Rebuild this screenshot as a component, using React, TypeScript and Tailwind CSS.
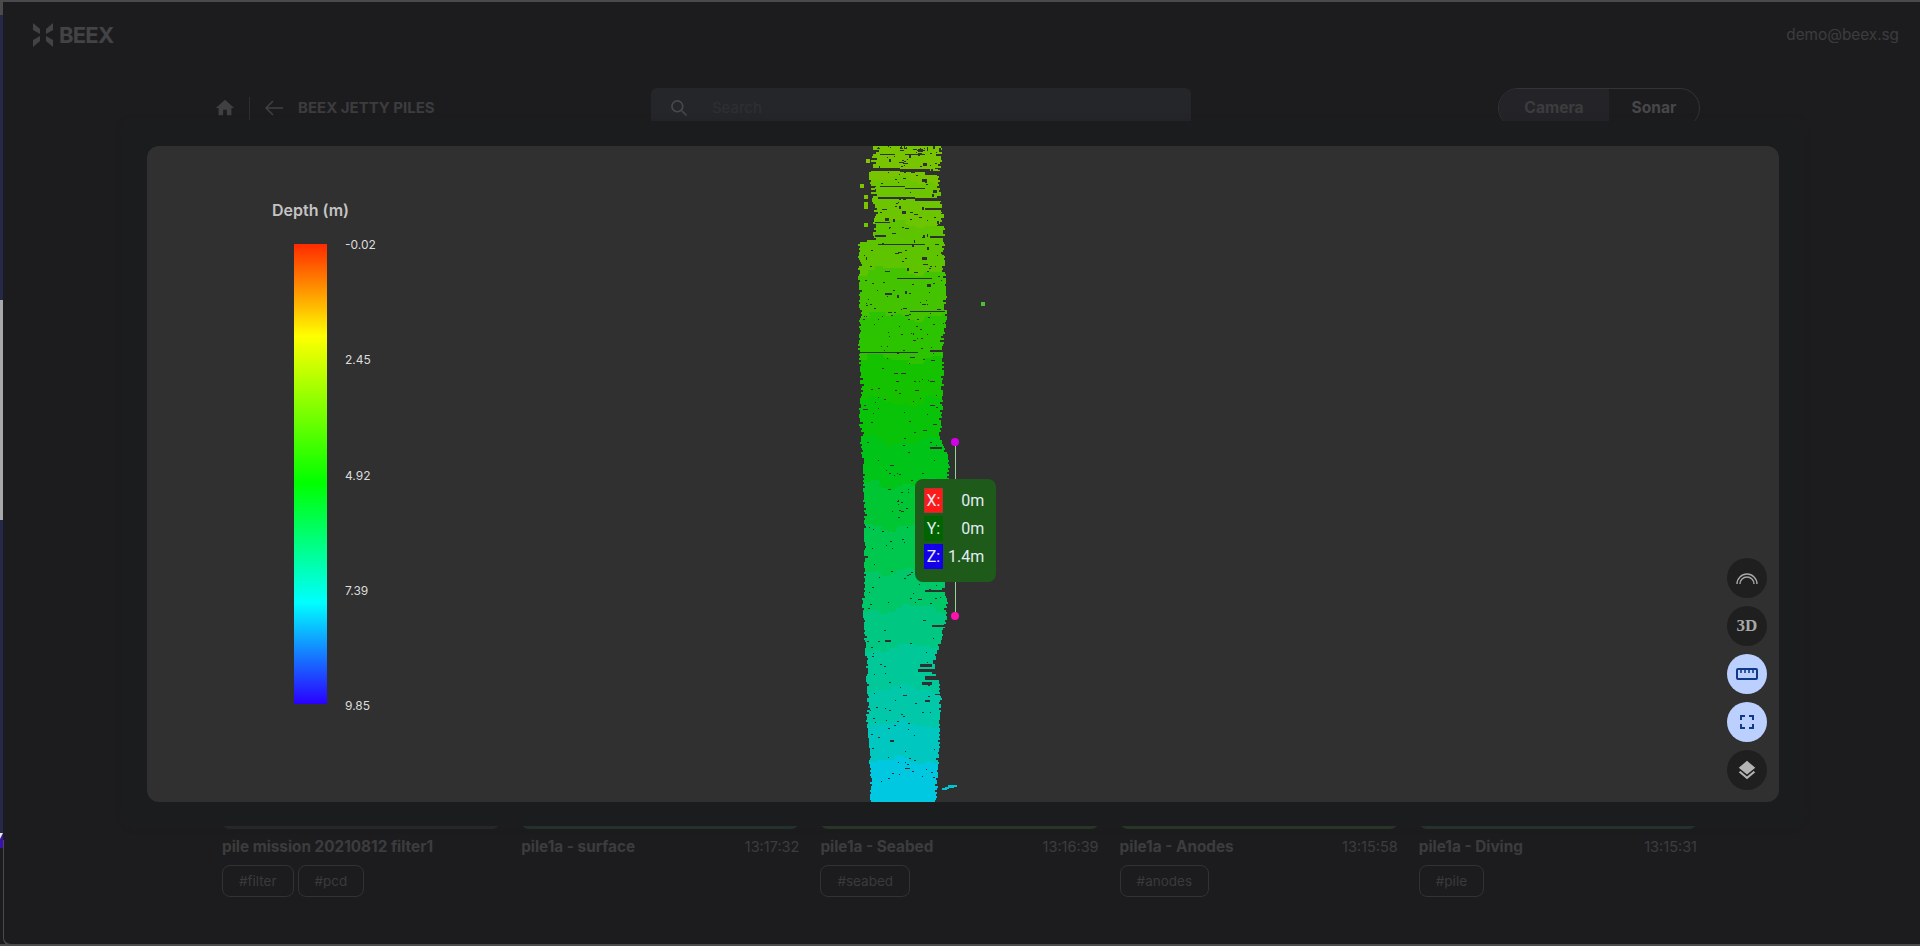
import React, { useMemo } from "react";

const sil: number[][] = [
  [146,873,942],[160,871,942],[175,868,940],[190,871,941],[210,873,944],[238,873,945],[242,858,945],[280,858,946],[300,859,947],[320,859,947],[340,858,944],[380,860,944],[420,859,943],[436,860,940],[445,860,945],[460,862,950],[490,863,950],[520,864,952],[560,864,950],[590,864,945],[600,862,948],[620,863,947],[640,864,942],[660,865,935],[672,866,935],[680,866,940],[700,867,942],[720,866,940],[740,868,940],[760,869,939],[780,870,938],[802,870,937],
];
const stops: number[][] = [
  [146,126,196,0],[240,98,196,0],[300,64,196,0],[380,20,194,0],[450,0,196,16],[550,0,200,80],[650,0,200,144],[720,0,200,176],[780,0,200,224],[802,0,204,240],
];
const bandEdges = [146,180,223,270,315,358,400,440,483,525,570,608,647,688,723,760,802];

function interp(table: number[][], y: number): number[] {
  for (let i = 0; i < table.length - 1; i++) {
    const a = table[i], b = table[i + 1];
    if (y >= a[0] && y <= b[0]) {
      const t = (y - a[0]) / (b[0] - a[0]);
      return a.map((v, k) => v + (b[k] - v) * t);
    }
  }
  return table[table.length - 1];
}
function rng(seed: number) {
  let s = seed;
  return () => {
    s = (s * 1664525 + 1013904223) >>> 0;
    return s / 4294967296;
  };
}

function bandColor(y: number) {
  let i = 0;
  while (i < bandEdges.length - 2 && y >= bandEdges[i + 1]) i++;
  const mid = (bandEdges[i] + bandEdges[i + 1]) / 2;
  const [, r, g, b] = interp(stops, mid);
  return `rgb(${Math.round(r)},${Math.round(g)},${Math.round(b)})`;
}

function PointCloud() {
  const cells = useMemo(() => {
    const r = rng(42);
    const out: { x: number; y: number; w: number; h: number; c: string }[] = [];
    const h = 2;
    for (let y = 146; y < 802; y += h) {
      const [, l, rt] = interp(sil, y);
      const amp = y < 240 ? 7 : y < 460 ? 5 : 4;
      const lj = Math.round(l + r() * r() * amp);
      const rj = Math.round(rt - r() * r() * amp);
      for (let x = lj; x < rj; x += 8) {
        const w = Math.min(8, rj - x);
        const wave = 4 * Math.sin(x / 11 + y / 90) + 2 * Math.sin(x / 4.3);
        out.push({ x, y, w, h, c: bandColor(y + wave) });
      }
    }
    return out;
  }, []);
  const holes = useMemo(() => {
    const r = rng(11);
    const out: { x: number; y: number; w: number; h: number }[] = [];
    const cracks: number[][] = [
      [168,870,900,3],[169,900,930,3],[171,925,946,4],[197,878,915,2],[198,915,945,3],[208,925,945,2],[154,880,895,1],[154,905,925,1],[186,880,905,1],[188,905,925,1],[222,875,890,1],[235,875,886,2],[236,930,945,2],[244,878,925,1],[278,897,932,1],[352,858,890,1],[352,890,918,1],[350,930,945,2],[311,910,945,1],[293,885,892,2],[447,930,942,2],[590,925,950,2],[625,932,946,2],[640,885,891,2],[664,920,932,3],[669,918,935,3],[676,925,938,4],[682,922,932,3],[700,925,930,2],[740,890,894,2],
    ];
    cracks.forEach(([y, a, b, h]) => out.push({ x: a, y, w: b - a, h }));
    for (let i = 0; i < 380; i++) {
      const y = 146 + Math.pow(r(), 1.4) * 640;
      const [, l, rt] = interp(sil, y);
      const x = l + 3 + r() * (rt - l - 6);
      const big = y < 420 ? r() > 0.78 : r() > 0.93;
      out.push({ x: Math.round(x), y: Math.round(y), w: big ? 3 + Math.round(r() * 2) : 1 + Math.round(r()), h: y < 300 && r() > 0.75 ? 3 : 1 });
    }
    return out;
  }, []);
  return (
    <svg className="absolute left-0 top-0" width={1920} height={946} viewBox="0 0 1920 946" shapeRendering="crispEdges">
      <defs>
        <clipPath id="pileclip"><rect x="147" y="146" width="1632" height="656" /></clipPath>
      </defs>
      <g clipPath="url(#pileclip)">
        {cells.map((p, i) => <rect key={i} x={p.x} y={p.y} width={p.w} height={p.h} fill={p.c} />)}
        {holes.map((p, i) => <rect key={i} x={p.x} y={p.y} width={p.w} height={p.h} fill="#303030" />)}
        <rect x="866" y="159" width="4" height="4" fill="#86c600" />
        <rect x="860" y="184" width="4" height="4" fill="#7cc400" />
        <rect x="864" y="195" width="4" height="4" fill="#7cc400" />
        <rect x="864" y="202" width="4" height="7" fill="#7cc400" />
        <rect x="864" y="223" width="4" height="4" fill="#70c400" />
        <rect x="981" y="302" width="4" height="4" fill="#4cc030" />
        <polygon points="942,788 948,787 948,785 957,785 957,787 950,788 946,790 942,790" fill="#00c4d0" />
      </g>
    </svg>
  );
}

const cards = [
  { title: "pile mission 20210812 filter1", time: "", tags: ["#filter", "#pcd"], bar: "#28292b" },
  { title: "pile1a - surface", time: "13:17:32", tags: [], bar: "#26352f" },
  { title: "pile1a - Seabed", time: "13:16:39", tags: ["#seabed"], bar: "#2a3a28" },
  { title: "pile1a - Anodes", time: "13:15:58", tags: ["#anodes"], bar: "#2a3a28" },
  { title: "pile1a - Diving", time: "13:15:31", tags: ["#pile"], bar: "#26352f" },
];

function Logo() {
  return (
    <div className="flex items-center gap-[6px]">
      <svg width="20" height="24" viewBox="0 0 20 24" fill="#434345">
        <polygon points="0,0 7,6 7,11 0,7" />
        <polygon points="20,0 13,6 13,11 20,7" />
        <polygon points="0,24 7,18 7,13 0,17" />
        <polygon points="20,24 13,18 13,13 20,17" />
      </svg>
      <span className="text-[22px] font-bold leading-none tracking-[-0.8px] text-[#434345]">BEEX</span>
    </div>
  );
}

function RoundBtn({ active, children }: { active?: boolean; children: React.ReactNode }) {
  return (
    <div className={`flex h-10 w-10 items-center justify-center rounded-full ${active ? "bg-[#bcd0ff]" : "bg-[#1f1f1f]"}`}>
      {children}
    </div>
  );
}

export default function App() {
  return (
    <div className="relative h-[946px] w-[1920px] overflow-hidden border-t-2 border-b-2 border-[#4a4a4c] bg-[#1c1c1e] font-['Inter','Noto_Sans',sans-serif]">
      {/* page behind the dialog */}
      <header className="flex h-[66px] items-center justify-between pl-[33px] pr-[21px]">
        <Logo />
        <span className="text-[15.3px] text-[#3c3c3e]">demo@beex.sg</span>
      </header>
      <div className="ml-[214px] mr-[220px] mt-[20px] flex h-[40px] items-center">
        <div className="flex w-[437px] items-center">
          <svg width="22" height="22" viewBox="0 0 24 24" fill="#404042"><path d="M10 20v-6h4v6h5v-8h3L12 3 2 12h3v8z" /></svg>
          <span className="ml-[13px] mr-[12px] h-[23px] w-px bg-[#2e2e30]" />
          <svg width="24" height="24" viewBox="0 0 24 24" fill="none" stroke="#404042" strokeWidth="1.5"><path d="M21 12H4M11 5l-7 7 7 7" /></svg>
          <span className="ml-[12px] text-[15px] font-bold text-[#3c3c3e]">BEEX JETTY PILES</span>
        </div>
        <div className="flex h-[40px] w-[540px] items-center rounded-md bg-[#25262a] pl-[18px]">
          <svg width="20" height="20" viewBox="0 0 24 24" fill="none" stroke="#48484a" strokeWidth="2"><circle cx="10" cy="10" r="6.5" /><path d="M15 15l6 6" /></svg>
          <span className="ml-[23px] text-[15px] text-[#2f2f33]">Search</span>
        </div>
        <div className="ml-auto flex h-[40px] w-[202px] overflow-hidden rounded-full border border-[#333336] text-[15.6px] font-bold">
          <div className="flex w-[110px] items-center justify-center bg-[#242428] text-[#3c3c3e]">Camera</div>
          <div className="flex flex-1 items-center justify-center text-[#47474a]">Sonar</div>
        </div>
      </div>
      <div className="ml-[222px] mt-[693px] grid w-[1475px] grid-cols-5 gap-[21px]">
        {cards.map((c) => (
          <div key={c.title}>
            <div className="h-[8px] rounded-b-lg" style={{ backgroundColor: c.bar }} />
            <div className="mt-[7px] flex h-[22px] items-center justify-between">
              <span className="text-[15.3px] font-bold text-[#3c3c3e]">{c.title}</span>
              <span className="text-[14.5px] text-[#3c3c3e]">{c.time}</span>
            </div>
            <div className="mt-[7px] flex h-[32px] gap-[4px]">
              {c.tags.map((t) => (
                <span key={t} className="flex items-center rounded-lg border border-[#323234] px-4 text-[13.5px] text-[#3a3a3c]">{t}</span>
              ))}
            </div>
          </div>
        ))}
      </div>

      {/* left window-edge artefact */}
      <div className="absolute left-0 top-[-2px] flex h-[848px] w-[3px] flex-col">
        <div className="h-[15px] bg-[#4a4a4c]" />
        <div className="h-[285px] bg-[#262848]" />
        <div className="h-[220px] bg-[#a8a8a8]" />
        <div className="h-[313px] bg-[#262848]" />
        <svg width="3" height="15" viewBox="0 0 3 15"><polygon points="3,0 3,15 0,15 0,6" fill="#3a10b0" /><polygon points="0,0 3,0 0,6" fill="#e8e8e8" /></svg>
      </div>
      <div className="absolute bottom-[-2px] left-[3px] h-[106px] w-[12px] rounded-bl-lg border-b-2 border-l border-[#4a4a4c] bg-[#1c1c1e]" />

      {/* dialog */}
      <div className="absolute left-[123px] top-[119px] h-[705px] w-[1680px] rounded-xl bg-[#1b1c1e] shadow-[0_0_6px_rgba(34,34,40,0.5)]" />
      <div className="absolute left-[147px] top-[144px] h-[656px] w-[1632px] rounded-xl bg-[#303030]" />
      <div className="absolute left-0 top-[-2px] h-[946px] w-[1920px]">
        <PointCloud />
      </div>

      {/* measurement */}
      <div className="absolute left-[955px] top-[440px] h-[174px] w-px bg-[#8fd78f]" />
      <div className="absolute left-[951px] top-[436px] h-[8px] w-[8px] rounded-full bg-[#d400e8]" />
      <div className="absolute left-[951px] top-[610px] h-[8px] w-[8px] rounded-full bg-[#ff10b0]" />
      <div className="absolute left-[915px] top-[477px] grid h-[103px] w-[81px] grid-cols-[19px_1fr] content-start gap-x-[5px] gap-y-[3px] rounded-lg bg-[#1e5a1a] pb-[13px] pl-[9px] pr-[12px] pt-[9px] font-['Roboto',sans-serif] text-[16px] leading-[25px] text-[#e4ecf4]">
        <span className="h-[25px] bg-[#ff1a1a] text-center outline outline-1 -outline-offset-1 outline-[#a83a30]">X:</span>
        <span className="text-right">0m</span>
        <span className="h-[25px] bg-[#006400] text-center">Y:</span>
        <span className="text-right">0m</span>
        <span className="h-[25px] bg-[#1400e8] text-center">Z:</span>
        <span className="text-right">1.4m</span>
      </div>

      {/* legend */}
      <span className="absolute left-[272px] top-[196px] text-[16px] font-semibold text-[#c4c4c4]">Depth (m)</span>
      <div className="absolute left-[294px] top-[242px] h-[460px] w-[33px] bg-[linear-gradient(to_bottom,#ff2a00,#ffff00_20%,#00ff00_52%,#00ffff_78%,#2a00ff)]" />
      {[["-0.02", 234], ["2.45", 349], ["4.92", 465], ["7.39", 580], ["9.85", 695]].map(([t, y]) => (
        <span key={t as string} className="absolute left-[345px] text-[12px] text-[#dcdcdc]" style={{ top: y as number }}>{t}</span>
      ))}

      {/* viewer controls */}
      <div className="absolute left-[1727px] top-[556px] flex flex-col gap-[8px]">
        <RoundBtn>
          <svg width="24" height="14" viewBox="0 0 24 14" fill="none" stroke="#a8a8a8" strokeWidth="1.4"><path d="M2 13a10 10 0 0 1 20 0M5 13a7 7 0 0 1 14 0" /></svg>
        </RoundBtn>
        <RoundBtn>
          <span className="font-['Liberation_Serif',serif] text-[17px] font-bold text-[#a8a8a8]">3D</span>
        </RoundBtn>
        <RoundBtn active>
          <svg width="24" height="14" viewBox="0 0 24 14" fill="none" stroke="#0f3a8c" strokeWidth="2"><rect x="2" y="2" width="20" height="10" rx="1" /><path d="M6 1v5M10 1v5M14 1v5M18 1v5" strokeWidth="1.6" /></svg>
        </RoundBtn>
        <RoundBtn active>
          <svg width="16" height="16" viewBox="0 0 16 16" fill="none" stroke="#0f3a8c" strokeWidth="2"><path d="M2 6V2h4M10 2h4v4M14 10v4h-4M6 14H2v-4" /></svg>
        </RoundBtn>
        <RoundBtn>
          <svg width="22" height="22" viewBox="0 0 24 24" fill="#b4b4b4"><path d="M12 2 3 9.5 12 17l9-7.5z" /><path d="M12 22 3 14.5l1.8-1.5L12 19l7.2-6 1.8 1.5z" /></svg>
        </RoundBtn>
      </div>
    </div>
  );
}
